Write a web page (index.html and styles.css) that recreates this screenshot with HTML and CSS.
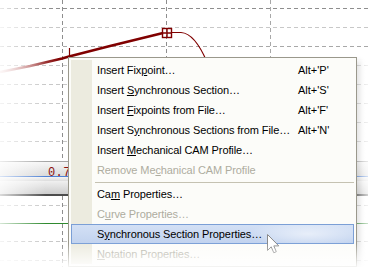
FILE: index.html
```html
<!DOCTYPE html>
<html lang="en">

<head>
  <meta name="viewport" content="width=device-width, initial-scale=1.0">
  <link rel="stylesheet" href="styles.css">
</head>

<body>

  <div class="screen">

    <div class="app">
      <svg class="chart chart-top" width="368" height="161" viewBox="0 0 368 161">
        <defs>
          <linearGradient id="curve-fade" gradientUnits="userSpaceOnUse" x1="0" y1="0" x2="60" y2="0">
            <stop offset="0" stop-color="#f2d8d8" />
            <stop offset="1" stop-color="#800000" />
          </linearGradient>
        </defs>
        <g class="grid">
          <line class="dark" x1="0" y1="8.5" x2="368" y2="8.5" />
          <line class="light" x1="0" y1="27.5" x2="368" y2="27.5" />
          <line class="mid" x1="0" y1="46.5" x2="368" y2="46.5" />
          <line class="light" x1="0" y1="65.5" x2="368" y2="65.5" />
          <line class="light" x1="0" y1="84.5" x2="368" y2="84.5" />
          <line class="light" x1="0" y1="103.5" x2="368" y2="103.5" />
          <line class="light" x1="0" y1="122.5" x2="368" y2="122.5" />
          <line class="light" x1="0" y1="141.5" x2="368" y2="141.5" />
          <line class="dark" x1="62.5" y1="0" x2="62.5" y2="161" />
          <line class="dark" x1="166.5" y1="0" x2="166.5" y2="161" />
          <line class="mid" x1="270.5" y1="0" x2="270.5" y2="161" />
        </g>
        <polyline class="curve-thick" points="0,72 30,66 62,58.5 69,56.5 110,46 163,33" />
        <path class="curve-thin" d="M69.5 48 V57 M171 32.5 H181 C190 33 198 41 207 62" />
        <rect class="marker" x="162.5" y="28.5" width="9" height="9" />
        <path class="marker" d="M167 28.5 V37.5 M162.5 33 H171.5" />
      </svg>

      <div class="bar value-bar"><span class="value">0.75</span></div>
      <div class="bar-gap"></div>
      <div class="bar scroll-bar"></div>

      <svg class="chart chart-bottom" width="368" height="71" viewBox="0 0 368 71">
        <g class="grid">
          <line class="light" x1="0" y1="9.5" x2="368" y2="9.5" />
          <line class="light" x1="0" y1="45.5" x2="368" y2="45.5" />
          <line class="light" x1="0" y1="64.5" x2="368" y2="64.5" />
          <line class="dark" x1="62.5" y1="0" x2="62.5" y2="71" />
        </g>
        <line class="green-line" x1="0" y1="27.5" x2="368" y2="27.5" />
      </svg>
    </div>

    <div class="menu">
      <div class="menu-item"><span class="label">Insert Fix<u>p</u>oint…</span><span>Alt+'P'</span></div>
      <div class="menu-item"><span class="label">Insert <u>S</u>ynchronous Section…</span><span>Alt+'S'</span></div>
      <div class="menu-item"><span class="label">Insert <u>F</u>ixpoints from File…</span><span>Alt+'F'</span></div>
      <div class="menu-item"><span class="label">Insert S<u>y</u>nchronous Sections from File…</span><span>Alt+'N'</span></div>
      <div class="menu-item"><span class="label">Insert <u>M</u>echanical CAM Profile…</span><span></span></div>
      <div class="menu-item disabled"><span class="label">Remove Me<u>c</u>hanical CAM Profile</span><span></span></div>
      <div class="menu-sep"></div>
      <div class="menu-item"><span class="label">Ca<u>m</u> Properties…</span><span></span></div>
      <div class="menu-item disabled"><span class="label">C<u>u</u>rve Properties…</span><span></span></div>
      <div class="menu-item active"><span class="label">S<u>y</u>nchronous Section Properties…</span><span></span></div>
      <div class="menu-item disabled"><span class="label"><u>N</u>otation Properties…</span><span></span></div>
    </div>

    <svg class="cursor" width="13" height="21" viewBox="0 0 13 21">
      <path d="M0.5 0.5 V16.5 L4.2 12.8 L6.8 18.8 L9.3 17.7 L6.8 11.9 H11.8 Z" />
    </svg>

    <div class="fade fade-left"></div>
    <div class="fade fade-right"></div>
    <div class="fade fade-bottom"></div>

  </div>

</body>

</html>
```

FILE: styles.css
```css
html,
body {
  margin: 0;
  padding: 0;
  background: #fff;
  font-family: "Liberation Sans", Arial, sans-serif;
}

.screen {
  position: relative;
  width: 368px;
  height: 267px;
  overflow: hidden;
  background: #fff;
}

.app {
  display: flex;
  flex-direction: column;
  height: 100%;
}

.chart {
  display: block;
  flex: none;
}

.grid line {
  stroke-width: 1;
  stroke-dasharray: 4 3;
  shape-rendering: crispEdges;
}

.grid .dark {
  stroke: #8e8e8e;
}

.grid .mid {
  stroke: #a8a8a8;
}

.grid .light {
  stroke: #c8c8c8;
}

.curve-thick {
  fill: none;
  stroke: url(#curve-fade);
  stroke-width: 2.6;
}

.curve-thin {
  fill: none;
  stroke: #800000;
  stroke-width: 1.2;
}

.marker {
  fill: none;
  stroke: #800000;
  stroke-width: 1.4;
}

.green-line {
  stroke: #2f8a2f;
  stroke-width: 1;
  shape-rendering: crispEdges;
}

/* value strip under the chart */
.bar {
  flex: none;
  box-sizing: border-box;
}

.value-bar {
  height: 16px;
  border-top: 1px solid #a4a4a4;
  border-bottom: 1px solid #4d80d4;
  background: linear-gradient(#f6f6f6, #d9d9d9);
  padding-left: 48px;
}

.value {
  font-family: "Liberation Mono", monospace;
  font-size: 12px;
  line-height: 14px;
  letter-spacing: 0.4px;
  color: #8b1010;
}

.bar-gap {
  flex: none;
  height: 4px;
  background: linear-gradient(#f4f4f4, #dcdcdc);
}

.scroll-bar {
  height: 15px;
  background: linear-gradient(#f0f0f0, #cdcdcd);
  border-bottom: 2px solid #4c4c4c;
}

/* context menu */
.menu {
  position: absolute;
  left: 68px;
  top: 57px;
  width: 289px;
  box-sizing: border-box;
  padding: 2px;
  border: 1px solid #9a988c;
  background: #fcfcf9 linear-gradient(#ecebdf, #ecebdf) no-repeat 2px 2px / 21px calc(100% - 4px);
  box-shadow: 4px 4px 5px rgba(0, 0, 0, 0.15);
  font-size: 11px;
  color: #000;
}

.menu-item {
  display: grid;
  grid-template-columns: 201px auto;
  align-items: center;
  height: 20px;
  box-sizing: border-box;
  padding-left: 25px;
  border: 1px solid transparent;
  white-space: nowrap;
}

.label {
  letter-spacing: -0.1px;
}

.menu-item.disabled {
  color: #aeac9f;
}

.menu-item.active {
  border-color: #7b9fd6;
  background:
    radial-gradient(ellipse 60px 14px at 84% 50%, rgba(255, 255, 255, 0.55), rgba(255, 255, 255, 0)),
    linear-gradient(#d3e0f5, #c2d3ef);
}

.menu-sep {
  height: 1px;
  margin: 2px 0 1px 24px;
  background: #c5c2b2;
}

.cursor {
  position: absolute;
  left: 267px;
  top: 234px;
}

.cursor path {
  fill: #fff;
  stroke: #8a8a8a;
  stroke-width: 1;
  stroke-linejoin: miter;
}

/* soft fade at the picture edges */
.fade {
  position: absolute;
  pointer-events: none;
}

.fade-left {
  left: 0;
  top: 0;
  width: 46px;
  height: 100%;
  background: linear-gradient(to right, rgba(255, 255, 255, 0.8), rgba(255, 255, 255, 0));
}

.fade-right {
  right: 0;
  top: 60px;
  bottom: 0;
  width: 11px;
  background: linear-gradient(to right, rgba(255, 255, 255, 0.3), rgba(255, 255, 255, 0.75));
}

.fade-bottom {
  left: 0;
  right: 0;
  bottom: 0;
  height: 24px;
  background: linear-gradient(rgba(255, 255, 255, 0), rgba(255, 255, 255, 0.9));
}
```
